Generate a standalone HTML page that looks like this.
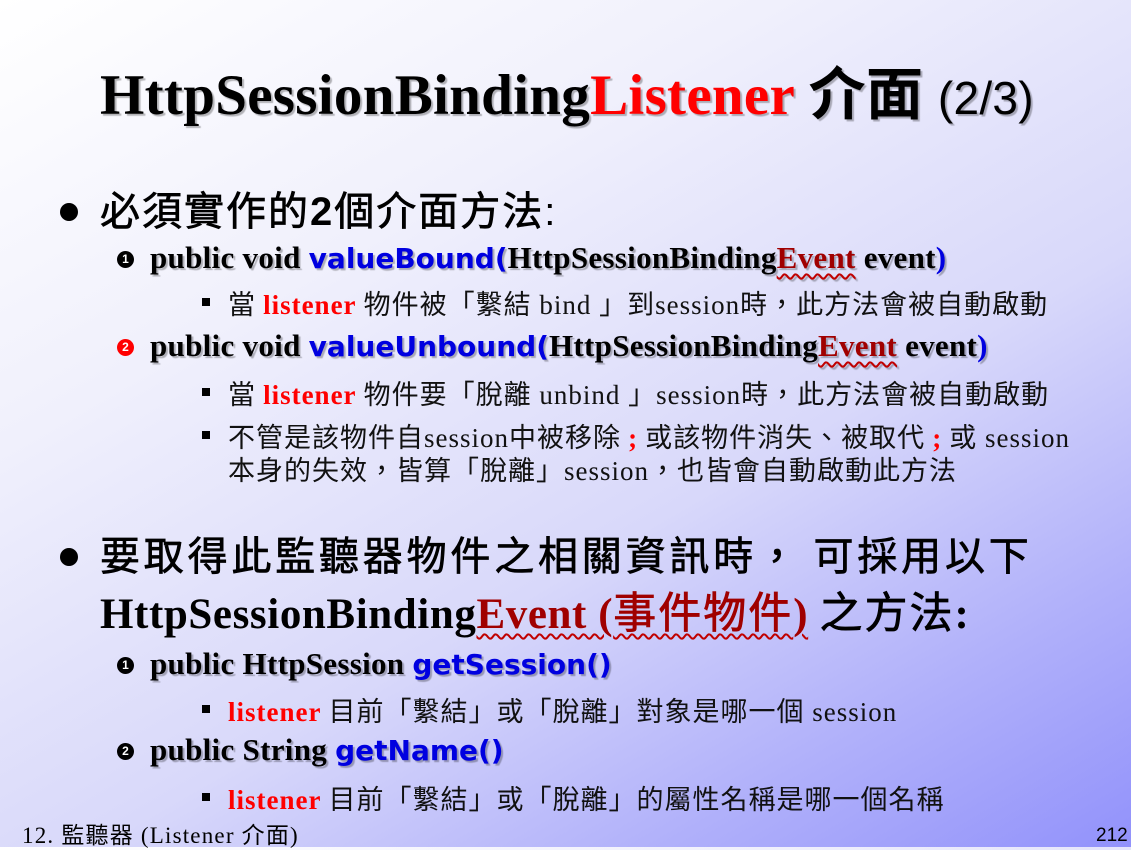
<!DOCTYPE html>
<html><head><meta charset="utf-8"><style>
html,body{margin:0;padding:0}
body{width:1131px;height:847px;overflow:hidden;position:relative;
background:linear-gradient(150deg,#ffffff 0%,#f0f0fc 30%,#d8d8fa 60%,#b0b0fa 82%,#9292fb 100%);
font-family:"Liberation Serif","Noto Sans CJK TC",serif;color:#000}
.a{position:absolute;white-space:nowrap;line-height:1}
.sh{text-shadow:2px 2px 1px rgba(0,0,0,.28)}
.t{left:100px;top:62px;font-size:57px;font-weight:bold;letter-spacing:0.3px}
.r{color:#f00}
.b{color:#0000e0}
.ev{color:#a00000;text-decoration:underline wavy #c00000;text-decoration-thickness:2px;text-underline-offset:5px}
.l1{font-size:40px;font-family:"Liberation Sans","Noto Sans CJK TC",sans-serif;letter-spacing:2px}
.k{font-family:"Noto Sans CJK TC",sans-serif;font-weight:normal;-webkit-text-stroke:0.7px #000}
.dot{position:absolute;width:18px;height:18px;border-radius:50%;background:#000}
.l2{font-size:31px;font-weight:bold;letter-spacing:0.3px}
.v{font-family:"DejaVu Sans","Liberation Sans",sans-serif;font-weight:bold;font-size:28px;color:#0000e0;letter-spacing:0px}
.num{position:absolute;width:17px;height:17px;border-radius:50%;background:#000;color:#fff;font:bold 12px "Liberation Sans",sans-serif;text-align:center;line-height:17px;letter-spacing:0}
.l3{font-size:27px;color:#111;letter-spacing:1px}
.sq{position:absolute;width:8px;height:8px;background:#000}
.cj{font-family:"Noto Sans CJK TC",sans-serif;font-weight:normal}
</style></head><body>
<div class="a t sh">HttpSessionBinding<span class="r">Listener</span> <span style="font-family:'Noto Sans CJK TC',sans-serif">介面</span> <span style="font-family:'Liberation Sans',sans-serif;font-weight:normal;font-size:46px">(2/3)</span></div>

<div class="dot" style="left:60px;top:203px"></div>
<div class="a l1" style="left:100px;top:188px"><span class="k">必須實作的</span><b>2</b><span class="k">個介面方法</span>:</div>

<div class="num" style="left:117px;top:251px">1</div>
<div class="a l2 sh" style="left:150px;top:242px">public void <span class="v">valueBound(</span>HttpSessionBinding<span class="ev">Event</span> event<span class="b">)</span></div>
<div class="sq" style="left:202px;top:298px"></div>
<div class="a l3" style="left:228px;top:289px"><span class="cj">當 </span><b class="r">listener</b><span class="cj"> 物件被「繫結</span> bind <span class="cj">」到</span>session<span class="cj">時，此方法會被自動啟動</span></div>

<div class="num" style="left:117px;top:339px;background:#f00">2</div>
<div class="a l2 sh" style="left:150px;top:330px">public void <span class="v">valueUnbound(</span>HttpSessionBinding<span class="ev">Event</span> event<span class="b">)</span></div>
<div class="sq" style="left:202px;top:388px"></div>
<div class="a l3" style="left:228px;top:379px"><span class="cj">當 </span><b class="r">listener</b><span class="cj"> 物件要「脫離</span> unbind <span class="cj">」</span>session<span class="cj">時，此方法會被自動啟動</span></div>
<div class="sq" style="left:202px;top:431px"></div>
<div class="a l3" style="left:228px;top:422px"><span class="cj">不管是該物件自</span>session<span class="cj">中被移除 </span><b class="r">;</b><span class="cj"> 或該物件消失、被取代 </span><b class="r">;</b><span class="cj"> 或</span> session</div>
<div class="a l3" style="left:228px;top:455px"><span class="cj">本身的失效，皆算「脫離」</span>session<span class="cj">，也皆會自動啟動此方法</span></div>

<div class="dot" style="left:60px;top:548px"></div>
<div class="a l1" style="left:100px;top:533px;letter-spacing:3.8px"><span class="k">要取得此監聽器物件之相關資訊時，&nbsp;可採用以下</span></div>
<div class="a l1" style="left:100px;top:589px;font-family:'Liberation Serif','Noto Sans CJK TC',serif;font-weight:bold;font-size:43px;letter-spacing:0.6px">HttpSessionBinding<span class="ev">Event (<span class="k" style="-webkit-text-stroke:0.7px #a00000;letter-spacing:2px">事件物件</span>)</span> <span class="k" style="letter-spacing:2px">之方法</span>:</div>

<div class="num" style="left:117px;top:657px">1</div>
<div class="a l2 sh" style="left:150px;top:648px">public HttpSession <span class="v">getSession()</span></div>
<div class="sq" style="left:202px;top:705px"></div>
<div class="a l3" style="left:228px;top:696px"><b class="r">listener</b><span class="cj"> 目前「繫結」或「脫離」對象是哪一個</span> session</div>

<div class="num" style="left:117px;top:743px">2</div>
<div class="a l2 sh" style="left:150px;top:734px">public String <span class="v">getName()</span></div>
<div class="sq" style="left:202px;top:793px"></div>
<div class="a l3" style="left:228px;top:784px"><b class="r">listener</b><span class="cj"> 目前「繫結」或「脫離」的屬性名稱是哪一個名稱</span></div>

<div class="a" style="left:22px;top:822px;font-size:23px;letter-spacing:1.2px">12. <span class="cj">監聽器</span> (Listener <span class="cj">介面</span>)</div>
<div class="a" style="left:1096px;top:826px;font-size:19px;font-family:'Liberation Sans',sans-serif">212</div>
</body></html>
